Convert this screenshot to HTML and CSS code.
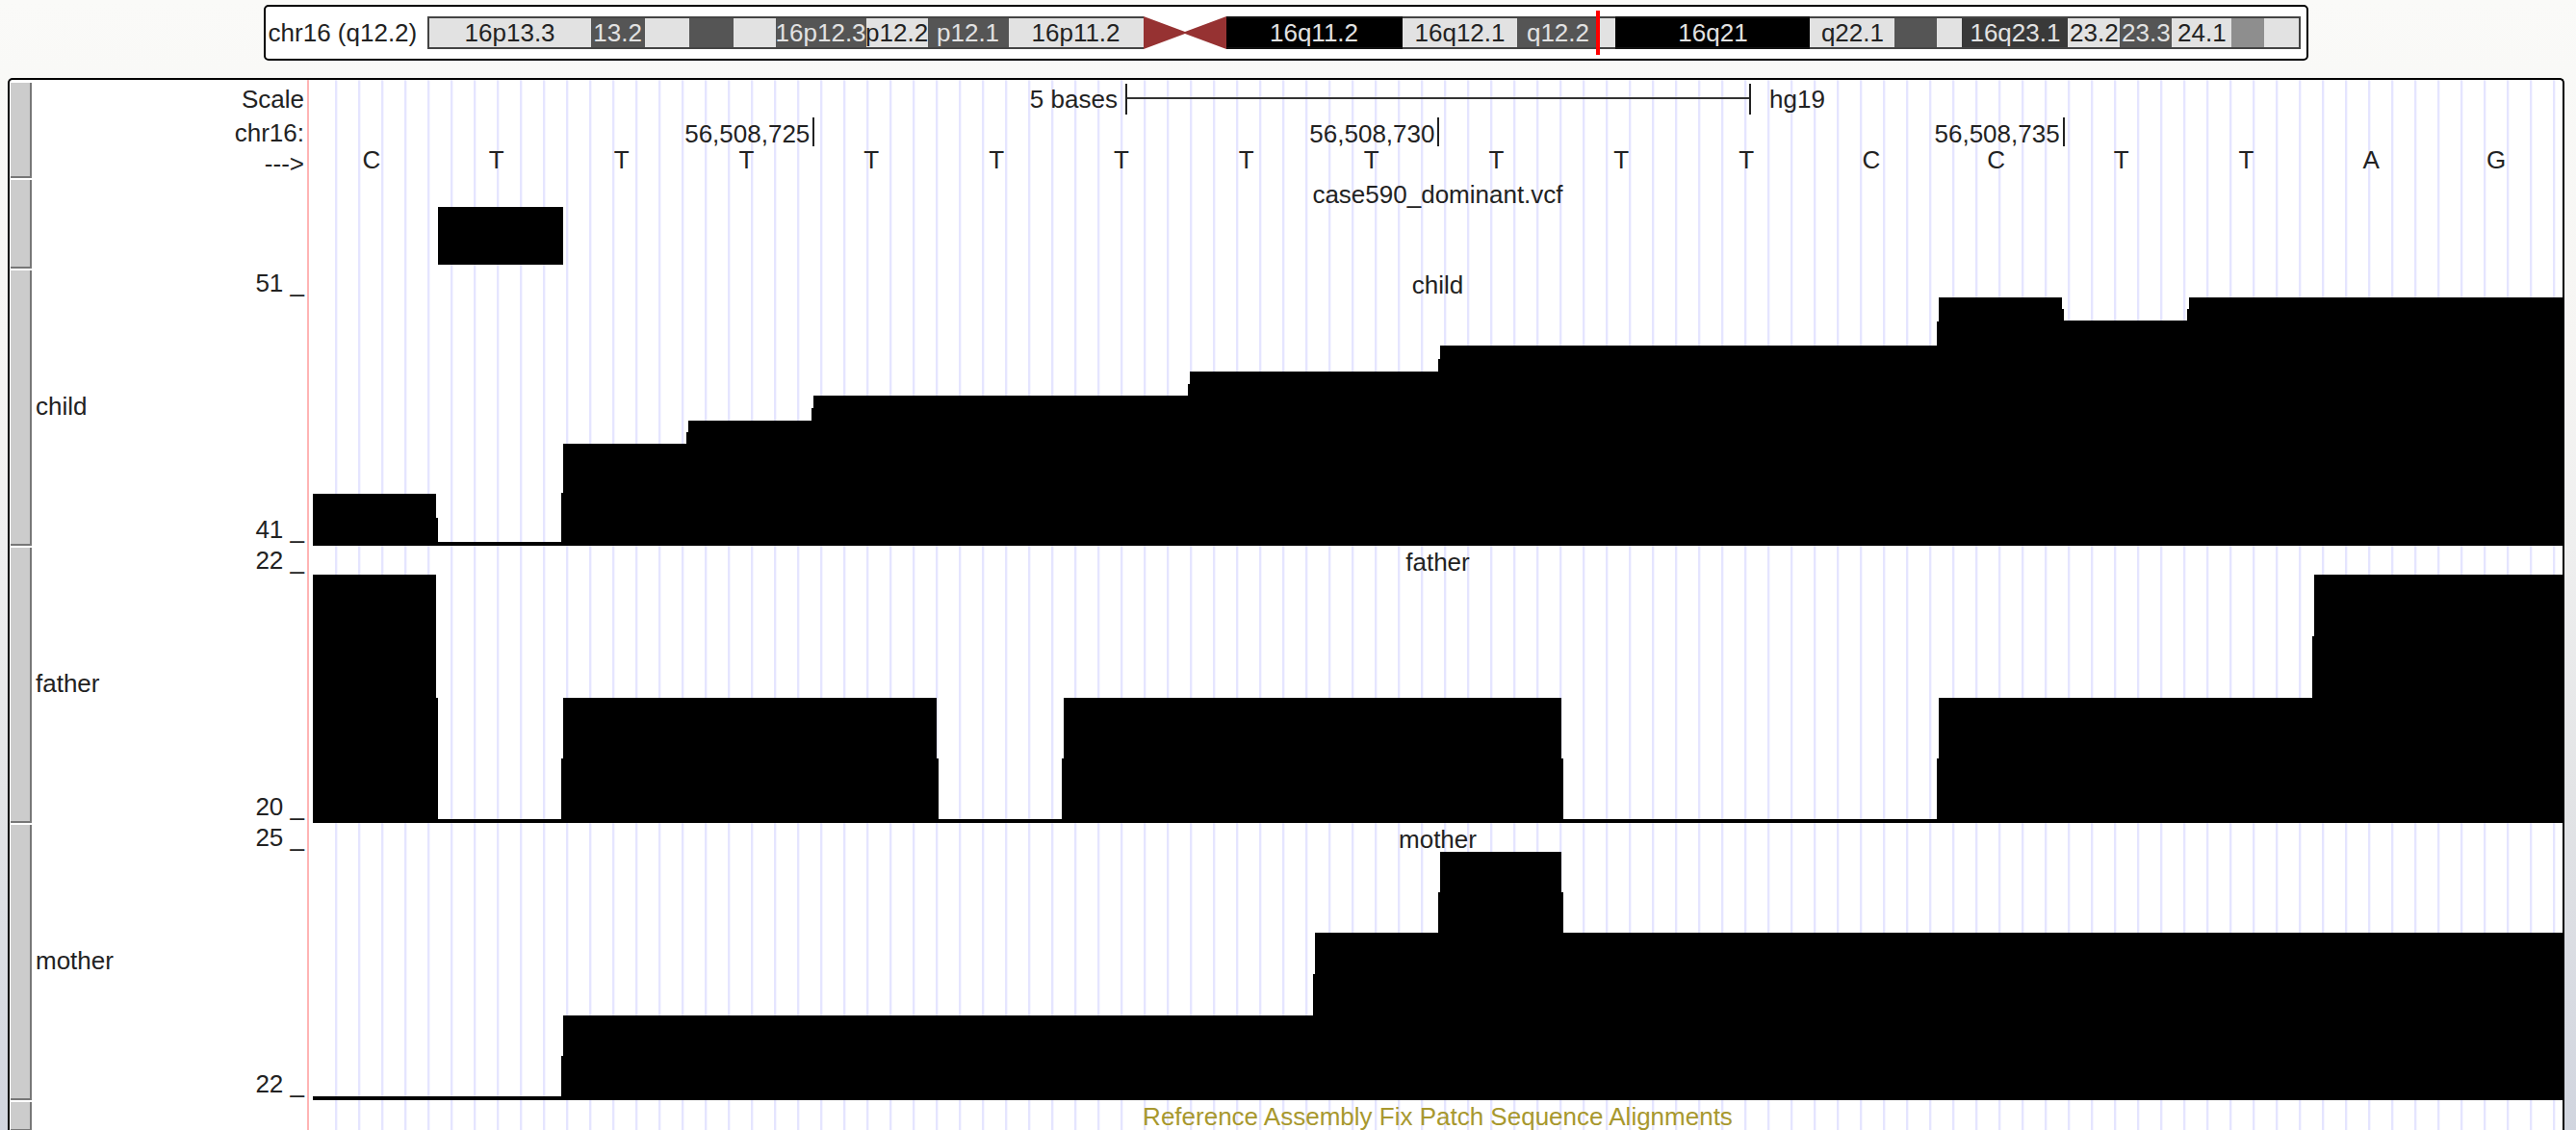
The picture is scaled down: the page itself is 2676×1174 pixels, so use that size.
FILE: index.html
```html
<!DOCTYPE html>
<html lang="en">
<head>
<meta charset="utf-8">
<title>chr16 (q12.2)</title>
<link rel="stylesheet" href="styles.css">
</head>
<body>
<header class="ideogram-box">
  <span class="ideogram-label">chr16 (q12.2)</span>
  <div class="ideogram">
    <span class="band" style="flex-grow:168">16p13.3</span>
    <span class="band dark" style="flex-grow:56">13.2</span>
    <span class="band" style="flex-grow:46"></span>
    <span class="band dark" style="flex-grow:46"></span>
    <span class="band" style="flex-grow:44"></span>
    <span class="band dark" style="flex-grow:94">16p12.3</span>
    <span class="band" style="flex-grow:64">p12.2</span>
    <span class="band dark" style="flex-grow:84">p12.1</span>
    <span class="band" style="flex-grow:140">16p11.2</span>
    <svg class="centromere" style="flex-grow:86" viewBox="0 0 86 34" preserveAspectRatio="none" aria-hidden="true"><path d="M0 0L43 16L86 0V34L43 18L0 34Z"/></svg>
    <span class="band black" style="flex-grow:183">16q11.2</span>
    <span class="band" style="flex-grow:120">16q12.1</span>
    <span class="band dark" style="flex-grow:84">q12.2</span>
    <span class="band" style="flex-grow:18"></span>
    <span class="band black" style="flex-grow:202">16q21</span>
    <span class="band" style="flex-grow:88">q22.1</span>
    <span class="band dark" style="flex-grow:44"></span>
    <span class="band" style="flex-grow:26"></span>
    <span class="band darker" style="flex-grow:110">16q23.1</span>
    <span class="band" style="flex-grow:54">23.2</span>
    <span class="band dark" style="flex-grow:54">23.3</span>
    <span class="band" style="flex-grow:62">24.1</span>
    <span class="band mid" style="flex-grow:34"></span>
    <span class="band" style="flex-grow:36"></span>
    <i class="marker"></i>
  </div>
</header>

<main class="browser">
  <section class="track ruler">
    <button class="handle" type="button" aria-label="Base position"></button>
    <div class="side ruler-side">
      <span class="scale-name">Scale</span>
      <span class="chrom-name">chr16:</span>
      <span class="strand">---&gt;</span>
    </div>
    <div class="data ruler-data">
      <div class="scale">
        <span class="scale-size">5 bases</span>
        <span class="scale-bar"></span>
        <span class="assembly">hg19</span>
      </div>
      <div class="positions">
        <span class="position first">56,508,725</span>
        <span class="position second">56,508,730</span>
        <span class="position third">56,508,735</span>
      </div>
      <div class="bases">
        <span>C</span><span>T</span><span>T</span><span>T</span><span>T</span><span>T</span><span>T</span><span>T</span><span>T</span><span>T</span><span>T</span><span>T</span><span>C</span><span>C</span><span>T</span><span>T</span><span>A</span><span>G</span>
      </div>
    </div>
  </section>

  <section class="track variants">
    <button class="handle" type="button" aria-label="Variants"></button>
    <div class="side"></div>
    <div class="data">
      <h2 class="title">case590_dominant.vcf</h2>
      <div class="variant-row"><span class="variant"></span></div>
    </div>
  </section>

  <section class="track signal">
    <button class="handle" type="button" aria-label="child track"></button>
    <div class="side">
      <span class="limit">51 _</span>
      <span class="name">child</span>
      <span class="limit">41 _</span>
    </div>
    <div class="data">
      <svg class="plot" viewBox="0 0 2337 286" preserveAspectRatio="none" aria-hidden="true"><path d="M0 286V232H128V257H130V282H258V231H260V180H388V168H390V156H518V143H520V130H909V118H911V105H1169V92H1171V78H1687V53H1689V28H1817V40H1819V52H1947V40H1949V28H2337V286Z"/></svg>
      <h2 class="title">child</h2>
    </div>
  </section>

  <section class="track signal">
    <button class="handle" type="button" aria-label="father track"></button>
    <div class="side">
      <span class="limit">22 _</span>
      <span class="name">father</span>
      <span class="limit">20 _</span>
    </div>
    <div class="data">
      <svg class="plot" viewBox="0 0 2337 286" preserveAspectRatio="none" aria-hidden="true"><path d="M0 286V28H128V156H130V282H258V219H260V156H648V219H650V282H778V219H780V156H1297V219H1299V282H1687V219H1689V156H2077V92H2079V28H2337V286Z"/></svg>
      <h2 class="title">father</h2>
    </div>
  </section>

  <section class="track signal">
    <button class="handle" type="button" aria-label="mother track"></button>
    <div class="side">
      <span class="limit">25 _</span>
      <span class="name">mother</span>
      <span class="limit">22 _</span>
    </div>
    <div class="data">
      <svg class="plot" viewBox="0 0 2337 286" preserveAspectRatio="none" aria-hidden="true"><path d="M0 286V282H258V240H260V198H1039V155H1041V112H1169V70H1171V28H1297V70H1299V112H2337V286Z"/></svg>
      <h2 class="title">mother</h2>
    </div>
  </section>

  <section class="track patches">
    <button class="handle" type="button" aria-label="Fix patches"></button>
    <div class="side"></div>
    <div class="data">
      <h2 class="title">Reference Assembly Fix Patch Sequence Alignments</h2>
    </div>
  </section>
</main>
</body>
</html>
```
FILE: styles.css
```css
* {
  box-sizing: border-box;
}

body {
  margin: 0;
  padding: 5px 12px 0 8px;
  min-height: 100vh;
  display: flex;
  flex-direction: column;
  gap: 18px;
  background: linear-gradient(#fafaf8 0%, #f6f5f3 30%, #efefef 48%, #e3e4e6 70%, #d1d5df 100%);
  color: #222;
  font-family: "Liberation Sans", Arial, Helvetica, sans-serif;
  font-size: 26px;
  line-height: 30px;
  white-space: nowrap;
}

/* Chromosome ideogram */

.ideogram-box {
  width: 80%;
  align-self: center;
  display: flex;
  padding: 10px 6px 10px 3px;
  background: #fff;
  border: 2px solid #000;
  border-radius: 5px;
}

.ideogram-label {
  flex: 0 0 165px;
  line-height: 34px;
}

.ideogram {
  flex: 1;
  position: relative;
  display: flex;
  height: 34px;
}

.band {
  flex: 1 1 0;
  min-width: 0;
  display: flex;
  justify-content: center;
  background: #e2e2e2;
  border: solid #444;
  border-width: 2px 0;
}

.band:first-child {
  border-left-width: 2px;
}

.band:nth-last-child(2) {
  border-right-width: 2px;
}

.band.mid {
  background: #8e8e8e;
}

.band.dark {
  background: #555;
  color: #e2e2e2;
}

.band.darker {
  background: #393939;
  color: #e2e2e2;
}

.band.black {
  background: #000;
  border-color: #111;
  color: #e2e2e2;
}

.centromere {
  flex: 1 1 0;
  width: 0;
  min-width: 0;
  height: 34px;
  fill: #963232;
}

.marker {
  position: absolute;
  left: 62.4%;
  top: -6px;
  width: 4px;
  height: 46px;
  background: #f00;
}

/* Track image */

.browser {
  flex: 1;
  display: flex;
  flex-direction: column;
  gap: 2px;
  padding: 3px 0 0 1px;
  border: 2px solid #000;
  border-bottom: 0;
  border-radius: 5px 5px 0 0;
  background:
    linear-gradient(#ffb4b4, #ffb4b4) 309px 0 / 2px 100% no-repeat,
    linear-gradient(#fff, #fff) 0 0 / 330px 100% no-repeat,
    linear-gradient(90deg, #e5e5ff 2px, #f6f6ff 2px 3px, transparent 3px) 338px 0 / 24px 100%,
    #fff;
}

.track {
  display: grid;
  grid-template-columns: 22px 286px 1fr;
}

.ruler {
  min-height: 99px;
}

.variants {
  min-height: 92px;
}

.signal {
  min-height: 286px;
}

.patches {
  min-height: 28px;
}

.handle {
  margin: 0;
  padding: 0;
  background: #ccc;
  border: solid #777;
  border-width: 0 2px 2px 0;
  cursor: pointer;
}

.side {
  display: flex;
  flex-direction: column;
  justify-content: space-between;
  padding: 0 3px 4px 4px;
}

.limit {
  text-align: right;
  line-height: 26px;
}

.data {
  display: grid;
  grid-template-rows: auto 1fr;
  margin-left: 6px;
}

.title {
  grid-area: 1 / 1;
  margin: 0;
  font-size: 26px;
  font-weight: normal;
  text-align: center;
}

.plot {
  grid-area: 1 / 1 / 3 / 2;
  width: 100%;
  height: 286px;
  shape-rendering: crispEdges;
}

/* Ruler */

.ruler-side {
  justify-content: flex-start;
  padding-bottom: 0;
  text-align: right;
}

.scale-name {
  line-height: 34px;
}

.chrom-name {
  line-height: 36px;
}

.strand {
  line-height: 28px;
}

.ruler-data {
  grid-template-rows: 36px 34px 20px;
}

.scale,
.positions {
  display: grid;
  grid-template-columns: repeat(36, minmax(0, 1fr));
}

.scale {
  line-height: 34px;
}

.scale-size {
  grid-column: 1 / 14;
  padding-right: 8px;
  text-align: right;
}

.scale-bar {
  grid-column: 14 / 24;
  height: 32px;
  margin: 1px -1px 3px 0;
  border: solid #222;
  border-width: 0 2px;
  background: linear-gradient(#333, #333) 0 14px / 100% 2px no-repeat;
}

.assembly {
  grid-column: 24 / 37;
  padding-left: 20px;
}

.position {
  height: 30px;
  margin-right: -2px;
  padding-right: 3px;
  border-right: 2px solid #222;
  line-height: 34px;
  text-align: right;
}

.first {
  grid-column: 1 / 9;
}

.second {
  grid-column: 9 / 19;
}

.third {
  grid-column: 19 / 29;
}

.bases {
  display: grid;
  grid-template-columns: repeat(18, minmax(0, 1fr));
  line-height: 20px;
  text-align: center;
}

.bases span {
  padding-right: 8px;
}

/* Variants */

.variant-row {
  display: grid;
  grid-template-columns: repeat(18, minmax(0, 1fr));
  padding-bottom: 4px;
}

.variant {
  grid-column: 2;
  margin-top: -2px;
  background: #000;
}

/* Patches */

.patches .title {
  color: #a8982e;
}
```
